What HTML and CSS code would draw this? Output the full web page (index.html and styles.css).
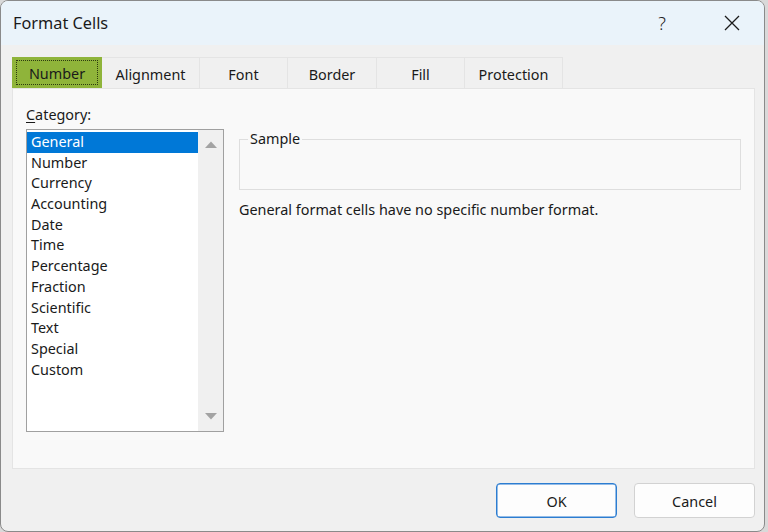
FILE: index.html
```html
<!DOCTYPE html>
<html>
<head>
<meta charset="utf-8">
<link rel="stylesheet" href="styles.css">
</head>
<body>
<div class="window">
  <div class="titlebar">
    <div class="title">Format Cells</div>
    <div class="help">?</div>
    <div class="close">
      <svg width="16" height="16" viewBox="0 0 16 16"><path d="M1 1 L15 15 M15 1 L1 15" stroke="#1b1b1b" stroke-width="1.3" fill="none"/></svg>
    </div>
  </div>
  <div class="content">
    <div class="tabs">
      <div class="tab active" style="width:90px"><span class="focus">Number</span></div>
      <div class="tab" style="width:98px">Alignment</div>
      <div class="tab" style="width:88px">Font</div>
      <div class="tab" style="width:89px">Border</div>
      <div class="tab" style="width:88px">Fill</div>
      <div class="tab" style="width:98px">Protection</div>
    </div>
    <div class="panel">
      <div class="leftcol">
        <div class="label"><u>C</u>ategory:</div>
        <div class="listbox">
          <div class="items">
            <div class="item selected">General</div>
            <div class="item">Number</div>
            <div class="item">Currency</div>
            <div class="item">Accounting</div>
            <div class="item">Date</div>
            <div class="item">Time</div>
            <div class="item">Percentage</div>
            <div class="item">Fraction</div>
            <div class="item">Scientific</div>
            <div class="item">Text</div>
            <div class="item">Special</div>
            <div class="item">Custom</div>
          </div>
          <div class="scrollbar">
            <svg width="12" height="8" viewBox="0 0 12 8"><path d="M0 7 L6 0.5 L12 7 Z" fill="#a3a3a3"/></svg>
            <svg width="12" height="8" viewBox="0 0 12 8"><path d="M0 1 L6 7.5 L12 1 Z" fill="#a3a3a3"/></svg>
          </div>
        </div>
      </div>
      <div class="rightcol">
        <div class="group">
          <div class="legend">Sample</div>
        </div>
        <div class="desc">General format cells have no specific number format.</div>
      </div>
    </div>
    <div class="footer">
      <div class="btn primary">OK</div>
      <div class="btn">Cancel</div>
    </div>
  </div>
</div>
</body>
</html>
```

FILE: styles.css
```css
html, body {
  margin: 0;
  padding: 0;
  background: #d9d9d9;
}
body {
  font-family: "Noto Sans", "Open Sans", sans-serif;
  color: #1a1a1a;
  width: 768px;
  height: 532px;
  overflow: hidden;
}
.window {
  box-sizing: border-box;
  width: 765px;
  height: 532px;
  border: 1px solid #8a8a8a;
  border-radius: 8px;
  background: #f0f0f0;
  overflow: hidden;
  display: flex;
  flex-direction: column;
}
.titlebar {
  height: 44px;
  background: #eaf3fa;
  display: flex;
  align-items: center;
  flex-shrink: 0;
}
.title {
  font-size: 16.3px;
  padding-left: 12px;
  flex: 1;
  padding-bottom: 1px;
}
.help {
  width: 20px;
  text-align: center;
  font-size: 18px;
  font-weight: 300;
  margin-right: 52px;
  color: #222;
  padding-bottom: 1px;
}
.close {
  width: 16px;
  height: 16px;
  margin-right: 24px;
  display: flex;
}
.content {
  padding: 12px 9px 0 11px;
  flex: 1;
  display: flex;
  flex-direction: column;
}
.tabs {
  display: flex;
  height: 31px;
}
.tab {
  box-sizing: border-box;
  height: 31px;
  border: 1px solid #e4e4e4;
  border-bottom: none;
  border-left: none;
  font-size: 14.4px;
  display: flex;
  align-items: center;
  justify-content: center;
  padding-top: 2px;
}
.tab.active {
  background: #8fb43a;
  border: none;
  padding: 3px 4px 3px 4px;
}
.focus {
  flex: 1;
  align-self: stretch;
  border: 1px dotted #2d3a10;
  display: flex;
  align-items: center;
  justify-content: center;
  padding-top: 1px;
}
.panel {
  box-sizing: border-box;
  height: 381px;
  background: #f9f9f9;
  border: 1px solid #e4e4e4;
  display: flex;
  padding: 16px 13px 0 13px;
  gap: 15px;
}
.leftcol {
  width: 198px;
  display: flex;
  flex-direction: column;
}
.label {
  font-size: 14.4px;
  height: 24px;
  line-height: 20px;
}
.label u {
  text-decoration-thickness: 1px;
  text-underline-offset: 2px;
}
.listbox {
  box-sizing: border-box;
  width: 198px;
  height: 303px;
  border: 1px solid #a0a0a0;
  background: #ffffff;
  display: flex;
}
.items {
  flex: 1;
  padding-top: 2px;
}
.item {
  height: 20.7px;
  line-height: 20.7px;
  font-size: 14.4px;
  padding-left: 4px;
}
.item.selected {
  background: #0078d7;
  color: #ffffff;
}
.scrollbar {
  width: 25px;
  background: #f0f0f0;
  display: flex;
  flex-direction: column;
  justify-content: space-between;
  align-items: center;
  padding: 11px 0 11px 0;
}
.rightcol {
  flex: 1;
  display: flex;
  flex-direction: column;
  padding-top: 34px;
}
.group {
  box-sizing: border-box;
  height: 51px;
  border: 1px solid #dedede;
  position: relative;
}
.legend {
  position: absolute;
  left: 8px;
  top: -11px;
  font-size: 14.4px;
  line-height: 20px;
  background: #f9f9f9;
  padding: 0 2px;
}
.desc {
  font-size: 14.4px;
  margin-top: 10px;
  line-height: 20px;
}
.footer {
  display: flex;
  justify-content: flex-end;
  gap: 17px;
  padding-top: 14px;
}
.btn {
  box-sizing: border-box;
  width: 121px;
  height: 35px;
  border: 1px solid #d2d2d2;
  border-radius: 4px;
  background: #fdfdfd;
  font-size: 14.4px;
  display: flex;
  align-items: center;
  justify-content: center;
  padding-top: 2px;
}
.btn.primary {
  border: 1px solid #2c7dd1;
  box-shadow: inset 0 0 0 0.5px #2c7dd1;
}
```
